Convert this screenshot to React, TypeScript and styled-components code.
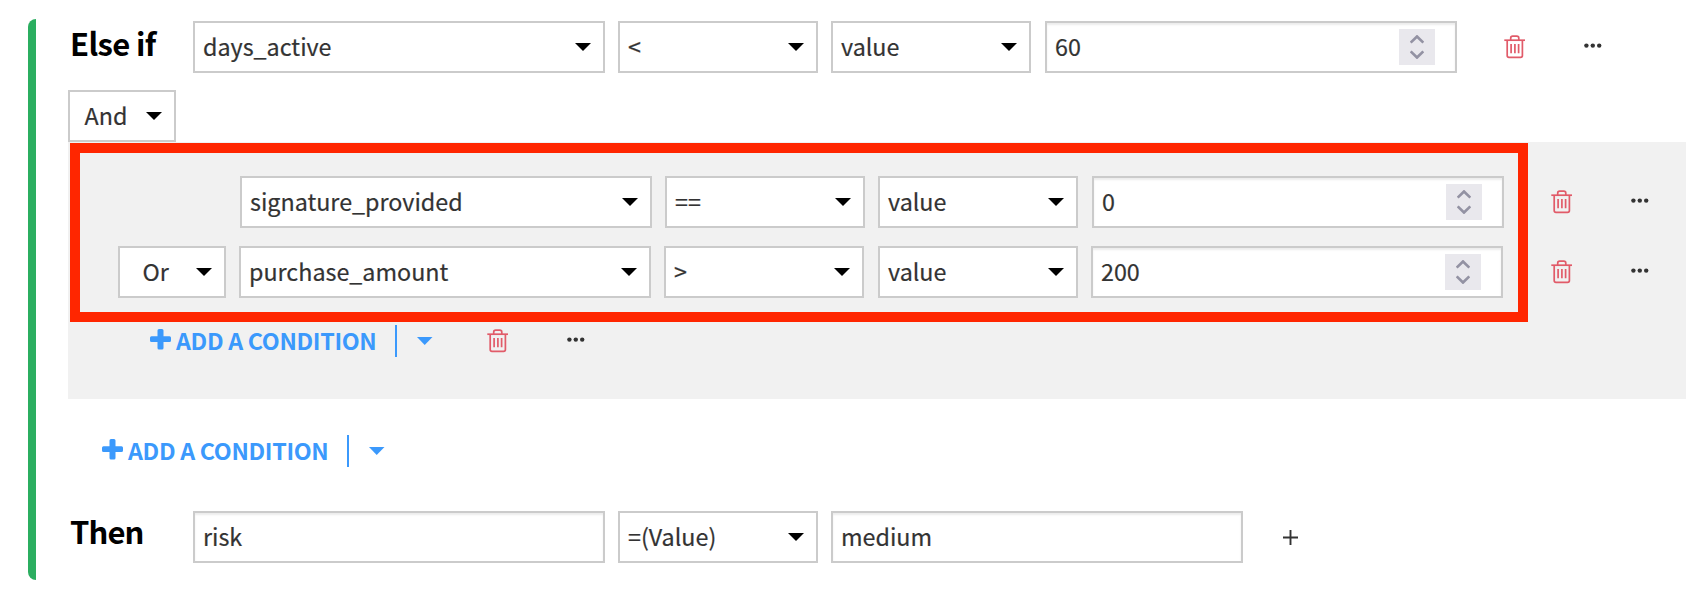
import React from "react";
import styled, { createGlobalStyle } from "styled-components";

const GlobalStyle = createGlobalStyle`
  * { box-sizing: border-box; }
  body {
    margin: 0;
    background: #fff;
    color: #333;
    font-family: "Noto Sans CJK SC", "Open Sans", sans-serif;
    font-size: 23.3px;
    line-height: 32px;
    overflow: hidden;
  }
`;

const Page = styled.main`
  display: flex;
  width: 1686px;
  height: 594px;
  padding: 19px 0 14px 28px;
`;

const AccentBar = styled.div`
  flex: none;
  width: 8px;
  background: #2bae60;
  border-radius: 8px 0 0 8px;
`;

const Rule = styled.section`
  flex: 1;
  display: flex;
  flex-direction: column;
  align-items: flex-start;
  padding: 2px 0 0 32px;
`;

const Row = styled.div<{ $indent?: number }>`
  display: flex;
  align-items: center;
  height: 52px;
  padding-left: ${(p) => p.$indent ?? 0}px;
`;

const Keyword = styled.h2<{ $lift: number; $spacing: number }>`
  flex: none;
  width: 125px;
  margin: 0;
  padding: 0 0 ${(p) => p.$lift}px 2px;
  color: #000;
  font-size: 31px;
  font-weight: 700;
  line-height: 42px;
  letter-spacing: ${(p) => p.$spacing}px;
  white-space: nowrap;
`;

const Box = styled.div<{ $width: number; $gap?: number; $inset?: boolean; $pad?: number }>`
  flex: none;
  display: flex;
  align-items: center;
  justify-content: space-between;
  width: ${(p) => p.$width}px;
  height: 52px;
  margin-right: ${(p) => p.$gap ?? 13}px;
  padding: 0 12px 0 ${(p) => p.$pad ?? 8}px;
  border: 2px solid #cbcbcb;
  background: #fff;
  box-shadow: ${(p) => (p.$inset ? "inset 0 2px 2px rgba(0, 0, 0, 0.075)" : "none")};
`;

const Label = styled.span`
  padding-bottom: 2px;
  white-space: pre;
  -webkit-text-stroke: 0.2px currentColor;
`;

const CaretIcon = styled.svg`
  flex: none;
  display: block;
  width: 16px;
  height: 8px;
  fill: currentColor;
`;

const BlackCaret = styled(CaretIcon)`
  color: #000;
`;

const Stepper = styled.div`
  flex: none;
  display: grid;
  place-items: center;
  width: 36px;
  height: 36px;
  margin-right: 8px;
  background: #e9e8ed;
`;

const Icon = styled.svg<{ $gap?: number }>`
  flex: none;
  display: block;
  margin-left: ${(p) => p.$gap ?? 0}px;
`;

const PlusIcon = styled(Icon)`
  margin-bottom: 3px;
`;

const Group = styled.section`
  position: relative;
  align-self: stretch;
  display: flex;
  flex-direction: column;
  height: 257px;
  padding-top: 34px;
  background: #f1f1f1;
`;

const Highlight = styled.div`
  position: absolute;
  left: 2px;
  top: 1px;
  width: 1458px;
  height: 179px;
  border: 10px solid #ff2600;
`;

const Spacer = styled.div<{ $h: number }>`
  flex: none;
  height: ${(p) => p.$h}px;
`;

const AddRow = styled.div<{ $indent: number }>`
  display: flex;
  align-items: center;
  height: 32px;
  padding-left: ${(p) => p.$indent}px;
  color: #3b99fc;
`;

const AddLabel = styled.span`
  width: 224px;
  padding: 0 0 2px 5px;
  font-weight: 700;
  letter-spacing: -0.33px;
  white-space: nowrap;
`;

const Divider = styled.span`
  width: 2px;
  height: 32px;
  margin-right: 20px;
  background: #3b99fc;
`;

const Caret = () => (
  <BlackCaret viewBox="0 0 16 8">
    <path d="M0 0H16L8 8Z" />
  </BlackCaret>
);

const Trash = ({ gap }: { gap: number }) => (
  <Icon $gap={gap} width="22" height="24" viewBox="0 0 22 24" fill="none" stroke="#e15b69" strokeWidth="1.7">
    <path d="M.3 5.2H21" />
    <path d="M6.7 5V3.2Q6.7 1.2 8.7 1.2H12.8Q14.8 1.2 14.8 3.2V5" />
    <path d="M3.2 5.2V20.5Q3.2 22.3 5 22.3H16.6Q18.4 22.3 18.4 20.5V5.2" />
    <path d="M7.1 9V18.2M10.9 9V18.2M14.6 9V18.2" />
  </Icon>
);

const Dots = ({ gap }: { gap: number }) => (
  <Icon $gap={gap} width="18" height="8" viewBox="0 0 18 8" fill="#333">
    <circle cx="2.4" cy="2.6" r="2.2" />
    <circle cx="8.8" cy="2.6" r="2.2" />
    <circle cx="15.2" cy="2.6" r="2.2" />
  </Icon>
);

const Select = ({ text, width, gap, pad }: { text: string; width: number; gap?: number; pad?: number }) => (
  <Box $width={width} $gap={gap} $pad={pad}>
    <Label>{text}</Label>
    <Caret />
  </Box>
);

const NumberInput = ({ text }: { text: string }) => (
  <Box $width={412} $gap={0} $inset>
    <Label>{text}</Label>
    <Stepper>
      <svg width="14" height="24" viewBox="0 0 14 24" fill="none" stroke="#9392a3" strokeWidth="2.7">
        <path d="M.7 7.6L7 1.5L13.3 7.6M.7 16.4L7 22.5L13.3 16.4" />
      </svg>
    </Stepper>
  </Box>
);

const AddCondition = ({ indent, children }: { indent: number; children?: React.ReactNode }) => (
  <AddRow $indent={indent}>
    <PlusIcon width="21" height="21" viewBox="0 0 21 21" fill="currentColor">
      <path d="M9 0H12Q13.5 0 13.5 1.5V7.3H19.5Q21 7.3 21 8.8V11.6Q21 13.1 19.5 13.1H13.5V19Q13.5 20.5 12 20.5H9Q7.5 20.5 7.5 19V13.1H1.5Q0 13.1 0 11.6V8.8Q0 7.3 1.5 7.3H7.5V1.5Q7.5 0 9 0Z" />
    </PlusIcon>
    <AddLabel>ADD A CONDITION</AddLabel>
    <Divider />
    <CaretIcon viewBox="0 0 16 8">
      <path d="M0 0H15.5L7.7 8Z" />
    </CaretIcon>
    {children}
  </AddRow>
);

export default function App() {
  return (
    <>
      <GlobalStyle />
      <Page>
        <AccentBar />
        <Rule>
          <Row>
            <Keyword $lift={8} $spacing={-0.65}>Else if</Keyword>
            <Select text="days_active" width={412} />
            <Select text="<" width={200} />
            <Select text="value" width={200} gap={14} />
            <NumberInput text="60" />
            <Trash gap={47} />
            <Dots gap={58} />
          </Row>
          <Spacer $h={17} />
          <Row>
            <Select text="And" width={108} pad={14.5} />
          </Row>
          <Group>
            <Row $indent={172}>
              <Select text="signature_provided" width={412} />
              <Select text="==" width={200} />
              <Select text="value" width={200} gap={14} />
              <NumberInput text="0" />
              <Trash gap={47} />
              <Dots gap={58} />
            </Row>
            <Spacer $h={18} />
            <Row $indent={50}>
              <Select text="Or" width={108} pad={22.5} />
              <Select text="purchase_amount" width={412} />
              <Select text=">" width={200} gap={14} />
              <Select text="value" width={200} />
              <NumberInput text="200" />
              <Trash gap={48} />
              <Dots gap={58} />
            </Row>
            <Spacer $h={27} />
            <AddCondition indent={82}>
              <Trash gap={54} />
              <Dots gap={58} />
            </AddCondition>
            <Highlight />
          </Group>
          <Spacer $h={36} />
          <AddCondition indent={34} />
          <Spacer $h={44} />
          <Row>
            <Keyword $lift={13} $spacing={-0.9}>Then</Keyword>
            <Box $width={412} $inset>
              <Label>risk</Label>
            </Box>
            <Select text="=(Value)" width={200} />
            <Box $width={412} $gap={40} $inset>
              <Label>medium</Label>
            </Box>
            <Icon width="15" height="15" viewBox="0 0 15 15" fill="none" stroke="#333" strokeWidth="1.9">
              <path d="M0 7.5H15M7.5 0V15" />
            </Icon>
          </Row>
        </Rule>
      </Page>
    </>
  );
}
